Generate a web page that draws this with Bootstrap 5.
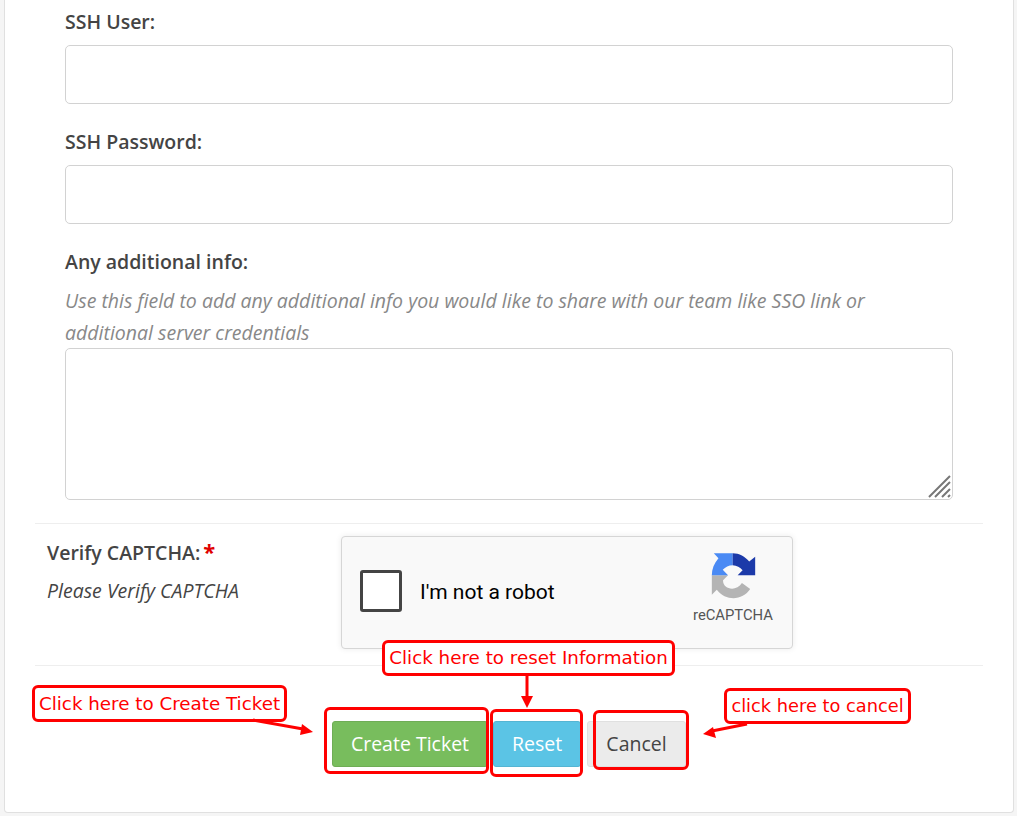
<!DOCTYPE html>
<html lang="en">
<head>
<meta charset="utf-8">
<title>Create Ticket</title>
<link href="https://cdn.jsdelivr.net/npm/bootstrap@5.3.0/dist/css/bootstrap.min.css" rel="stylesheet">
<style>
html,body{height:816px;overflow:hidden;background:#f5f5f5;}
body{font-family:"Open Sans",sans-serif;font-size:19.5px;color:#444;}
.sheet{position:relative;width:1017px;height:816px;padding:0 3px 0 4px;}
.panel{height:813px;background:#fff;border:1px solid #e0e0e0;border-top:0;border-radius:0 0 4px 4px;padding:6px 30px 0 30px;}
.fields{padding:0 30px;}
.fld-label{display:block;font-weight:600;font-size:19.5px;line-height:32px;margin-bottom:7px;color:#444;}
.fld-input{height:59px;border:1px solid #d2d2d2;border-radius:5px;margin-bottom:22px;}
.fld-help{font-style:italic;color:#888;line-height:32px;margin-bottom:-1px;margin-top:0;}
.area-wrap{position:relative;height:152px;}
.fld-area{height:152px;border:1px solid #d2d2d2;border-radius:5px;resize:none;}
.grip{position:absolute;right:1px;bottom:2px;}
.rule{border-top:1px solid #eeeeee;margin:0;opacity:1;}
.rule-top{margin-top:23px;}
.captcha-row{height:141px;padding:12px 0 0 12px;}
.captcha-side{width:294px;margin-top:-1px;}
.captcha-title{font-weight:600;line-height:32px;margin-bottom:6px;margin-top:0;}
.captcha-title span{color:#e00000;font-weight:700;font-size:22px;margin-left:3px;}
.captcha-note{font-style:italic;line-height:32px;color:#444;}
.captcha-box{width:452px;height:113px;background:#f9f9f9;border:1px solid #d6d6d6;border-radius:4px;box-shadow:0 0 6px rgba(0,0,0,.08);padding:0 18px 0 18px;font-family:Roboto,sans-serif;}
.captcha-check{width:42px;height:42px;background:#fff;border:3px solid #444;border-radius:3px;margin-right:18px;margin-bottom:3px;}
.captcha-text{font-size:21px;color:#000;margin-top:1px;}
.captcha-logo{width:84px;margin-top:-6px;color:#555;font-size:14.8px;margin-right:-1px;}
.captcha-logo svg{display:block;margin-bottom:5px;}
.actions{padding:55px 0 0 297px;gap:5px;}
.act{height:46px;font-size:19.5px;font-family:"Open Sans",sans-serif;border-radius:3px;padding:0;}
.act-green{width:156px;background:#78bd5d;border:1px solid #6fad56;color:#fff;}
.act-blue{width:88px;background:#5bc4e5;border:1px solid #55b5d3;color:#fff;}
.act-grey{width:99px;margin-left:1px;background:#ebebeb;border:1px solid #e0e0e0;color:#444;}
.note{position:absolute;background:#fff;border:3px solid #f00;border-radius:6px;color:#f00;font-family:"DejaVu Sans",sans-serif;font-size:18.3px;line-height:1;display:flex;align-items:center;justify-content:center;white-space:nowrap;}
.ring{position:absolute;border:3px solid #f00;border-radius:6px;}
.n1{left:32px;top:685px;width:255px;height:37px;padding-top:1px;}
.n2{left:382px;top:640px;width:293px;height:36px;}
.n3{left:724px;top:688px;width:187px;height:36px;font-size:17.8px;}
.r1{left:324px;top:707px;width:165px;height:67px;}
.r2{left:490px;top:709px;width:93px;height:68px;}
.r3{left:593px;top:710px;width:96px;height:60px;}
.arrows{position:absolute;left:0;top:0;pointer-events:none;}
</style>
</head>
<body>
<div class="sheet">
  <div class="panel">
    <form class="fields">
      <label class="fld-label" for="u">SSH User:</label>
      <input id="u" class="form-control fld-input" type="text">
      <label class="fld-label" for="p">SSH Password:</label>
      <input id="p" class="form-control fld-input" type="text">
      <label class="fld-label" for="i">Any additional info:</label>
      <p class="fld-help">Use this field to add any additional info you would like to share with our team like SSO link or additional server credentials</p>
      <div class="area-wrap">
        <textarea id="i" class="form-control fld-area"></textarea>
        <svg class="grip" width="24" height="24" viewBox="0 0 24 24" fill="none" stroke="#777" stroke-width="2"><path d="M1 23 22 2M7 23 22 8M14 23 22 15M20 23l2-2"/></svg>
      </div>
    </form>
    <hr class="rule rule-top">
    <div class="captcha-row d-flex">
      <div class="captcha-side">
        <div class="captcha-title">Verify CAPTCHA:<span>*</span></div>
        <div class="captcha-note">Please Verify CAPTCHA</div>
      </div>
      <div class="captcha-box d-flex align-items-center">
        <div class="captcha-check"></div>
        <div class="captcha-text flex-grow-1">I'm not a robot</div>
        <div class="captcha-logo d-flex flex-column align-items-center">
          <svg width="45" height="47" viewBox="95 38 135 142">
            <path fill="#b4b4b4" d="M97 108H146L131 123C129 150 170 160 188 132L213 150C190 185 140 188 112 152L97 167Z"/>
            <path fill="#4a8af4" d="M97 108C97 90 104 72 117 57L103 42H160V78C148 78 138 84 130 92L146 108Z"/>
            <path fill="#1c3aa9" d="M160 42C180 42 198 52 210 67L228 52V108H175L190 93C183 85 172 78 160 78Z"/>
          </svg>
          <div>reCAPTCHA</div>
        </div>
      </div>
    </div>
    <hr class="rule">
    <div class="actions d-flex">
      <button type="button" class="btn act act-green">Create Ticket</button>
      <button type="button" class="btn act act-blue">Reset</button>
      <button type="button" class="btn act act-grey">Cancel</button>
    </div>
  </div>
  <div class="ring r1"></div>
  <div class="ring r2"></div>
  <div class="ring r3"></div>
  <div class="note n1">Click here to Create Ticket</div>
  <div class="note n2">Click here to reset Information</div>
  <div class="note n3">click here to cancel</div>
  <svg class="arrows" width="1017" height="816" viewBox="0 0 1017 816" fill="#f00" stroke="none">
    <path d="M253 720 303 729" stroke="#f00" stroke-width="3"/><path d="M313 732 300 735 302 724Z"/>
    <path d="M527 676V697" stroke="#f00" stroke-width="3"/><path d="M527 708 521 696H533Z"/>
    <path d="M747 724 712 731" stroke="#f00" stroke-width="3"/><path d="M703 734 713 727 716 738Z"/>
  </svg>
</div>
<script src="https://cdn.jsdelivr.net/npm/bootstrap@5.3.0/dist/js/bootstrap.bundle.min.js"></script>
</body>
</html>
